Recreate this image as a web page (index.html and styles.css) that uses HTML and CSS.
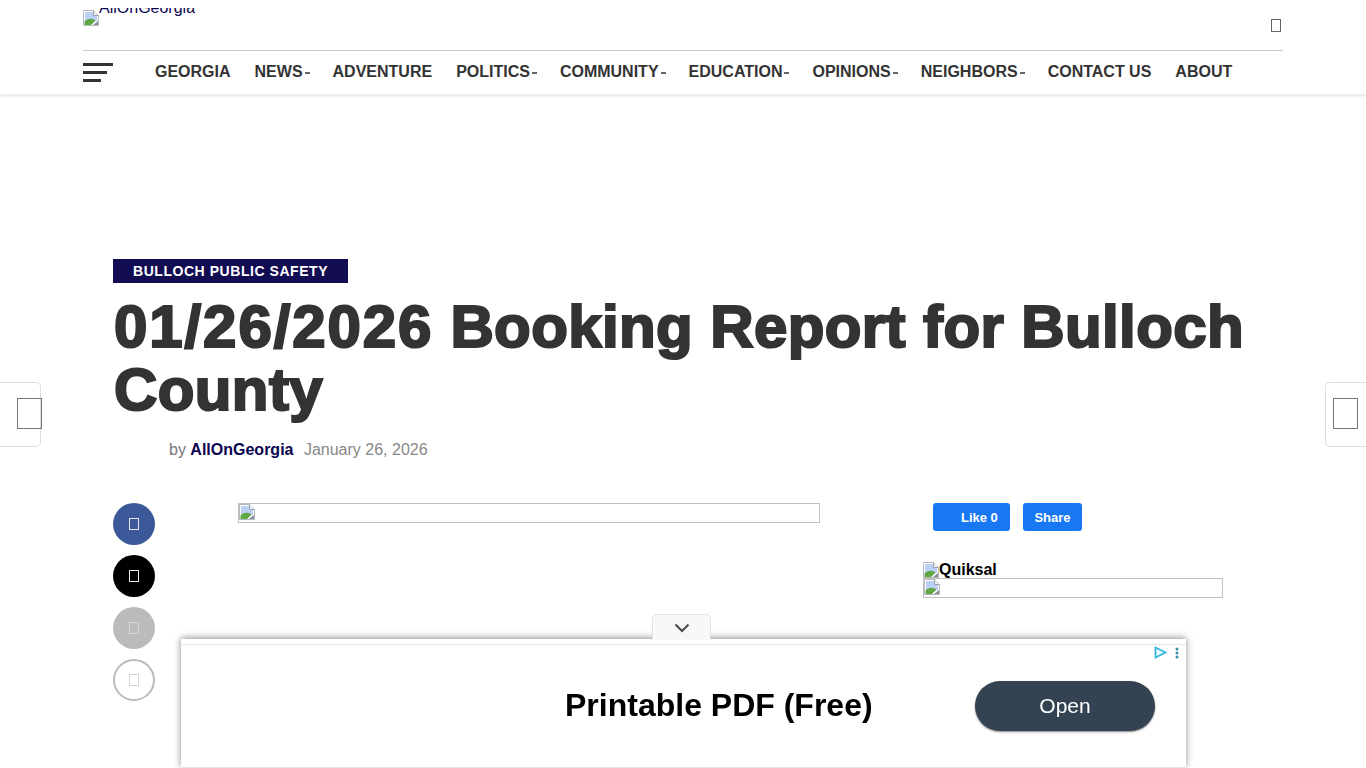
FILE: index.html
```html
<!DOCTYPE html>
<html lang="en">
<head>
<meta charset="utf-8">
<title>01/26/2026 Booking Report for Bulloch County</title>
<link rel="stylesheet" href="styles.css">
</head>
<body>
<svg class="defs" width="0" height="0" aria-hidden="true">
  <symbol id="broken" viewBox="0 0 16 16">
    <path d="M0.5 0.5H10.5L15.5 5.5V15.5H0.5Z" fill="#fff" stroke="#b4b8bf"/>
    <path d="M2 2H10V6H14V11L2 13Z" fill="#bcd0f6"/>
    <path d="M1.500 15V11.500C5 8 9 8 12.500 10.500L8 15Z" fill="#5fa843"/>
    <path d="M10.5 0.5V5.5H15.5" fill="#eef0f4" stroke="#9aa0a8"/>
    <path d="M10 15L15 11V15Z" fill="#8a8f96"/>
  </symbol>
</svg>

<header class="site-header">
  <div class="header-inner">
    <div class="logo-row">
      <a class="logo" href="#">
        <svg class="broken-icon"><use href="#broken"/></svg>
        <span class="logo-alt"><span>AllOnGeorgia</span></span>
      </a>
      <span class="tofu tofu-search"></span>
    </div>
    <nav class="nav-row">
      <span class="burger"><i class="b1"></i><i class="b2"></i><i class="b3"></i></span>
      <ul class="menu">
        <li>Georgia</li>
        <li class="has-sub">News</li>
        <li>Adventure</li>
        <li class="has-sub">Politics</li>
        <li class="has-sub">Community</li>
        <li class="has-sub">Education</li>
        <li class="has-sub">Opinions</li>
        <li class="has-sub">Neighbors</li>
        <li>Contact Us</li>
        <li>About</li>
      </ul>
    </nav>
  </div>
</header>

<main class="page">
  <span class="category">Bulloch Public Safety</span>
  <h1 class="title"><span class="num">01/26/2026</span> <span>Booking Report for Bulloch</span> <span>County</span></h1>
  <p class="meta">by <a class="author" href="#">AllOnGeorgia</a> <span class="date">January 26, 2026</span></p>

  <div class="article-grid">
    <div class="share-col">
      <span class="circle c-fb"><i class="tofu"></i></span>
      <span class="circle c-x"><i class="tofu"></i></span>
      <span class="circle c-grey"><i class="tofu"></i></span>
      <span class="circle c-outline"><i class="tofu"></i></span>
    </div>
    <div class="main-col">
      <div class="img-box feature"><svg class="broken-icon"><use href="#broken"/></svg></div>
    </div>
    <aside class="side-col">
      <div class="fb-row">
        <span class="fb-btn fb-like">Like 0</span>
        <span class="fb-btn fb-share">Share</span>
      </div>
      <div class="quiksal"><svg class="broken-icon"><use href="#broken"/></svg><b>Quiksal</b></div>
      <div class="img-box side-ad"><svg class="broken-icon"><use href="#broken"/></svg></div>
    </aside>
  </div>
</main>

<a class="side-tab tab-left" href="#"><span class="tab-box"></span></a>
<a class="side-tab tab-right" href="#"><span class="tab-box"></span></a>

<div class="ad-bar">
  <span class="ad-toggle">
    <svg width="16" height="10" viewBox="0 0 16 10"><path d="M1.5 1.5L8 8L14.500 1.500" fill="none" stroke="#4a4a4a" stroke-width="2"/></svg>
  </span>
  <div class="ad-body">
    <span class="ad-marks">
      <svg width="13" height="13" viewBox="0 0 13 13"><path d="M1.500 1.500L11.500 6.500L1.500 11.500Z" fill="#eefaff" stroke="#35b8dc" stroke-width="1.800"/></svg>
      <svg width="4" height="12" viewBox="0 0 4 12"><circle cx="2" cy="2" r="1.500" fill="#3a8fa8"/><circle cx="2" cy="6" r="1.500" fill="#3a8fa8"/><circle cx="2" cy="10" r="1.500" fill="#3a8fa8"/></svg>
    </span>
    <span class="ad-title">Printable PDF (Free)</span>
    <span class="ad-open">Open</span>
  </div>
</div>
</body>
</html>
```
FILE: styles.css
```css
* { box-sizing: border-box; }
html, body { margin: 0; padding: 0; }
body {
  background: #fff;
  color: #333;
  font-family: "Liberation Sans", Arial, sans-serif;
  height: 768px;
  overflow: hidden;
}
.defs { position: absolute; }
a { color: inherit; text-decoration: none; }

.site-header {
  height: 95px;
  background: #fff;
  border-bottom: 1px solid #eee;
  box-shadow: 0 1px 3px rgba(0, 0, 0, .12);
}
.header-inner { width: 1200px; margin: 0 auto; }
.logo-row {
  height: 51px;
  border-bottom: 1px solid #c9c9c9;
  display: flex;
  justify-content: space-between;
  align-items: flex-start;
}
.logo {
  display: flex;
  align-items: flex-start;
  padding-top: 8px;
  color: #0c0550;
  font-size: 16px;
}
.broken-icon { width: 16px; height: 16px; display: block; flex: none; }
.logo .broken-icon { margin-top: 2px; }
.logo-alt {
  display: block;
  height: 9px;
  overflow: hidden;
}
.logo-alt span { display: block; line-height: 16px; margin-top: -8px; }
.tofu { display: block; border: 1px solid #333; }
.tofu-search { width: 10px; height: 13px; margin: 19px 2px 0 0; border-color: #666; }

.nav-row { height: 43px; display: flex; align-items: center; }
.burger { width: 30px; display: flex; flex-direction: column; gap: 5px; margin-right: 42px; }
.burger i { display: block; height: 3px; background: #333; }
.b2 { width: 24px; }
.b3 { width: 18px; }
.menu {
  list-style: none;
  margin: 0 0 2px;
  padding: 0;
  display: flex;
  gap: 24px;
  font-size: 16px;
  font-weight: 700;
  text-transform: uppercase;
  color: #333;
  line-height: 41px;
}
.has-sub { position: relative; margin-right: -1px; padding-right: 7px; }
.has-sub::after {
  content: "";
  position: absolute;
  right: 0;
  top: 21px;
  width: 5px;
  height: 2px;
  background: #666;
}

.page { width: 1200px; margin: 0 auto; padding: 164px 30px 0; }
.category {
  display: block;
  width: 235px;
  height: 24px;
  padding-left: 20px;
  background: #120c52;
  color: #fff;
  font-size: 14px;
  font-weight: 700;
  letter-spacing: .55px;
  line-height: 25px;
  text-transform: uppercase;
}
.title {
  margin: 12px 0 0;
  padding-left: 1px;
  font-size: 60px;
  line-height: 63px;
  font-weight: 700;
  color: #333;
  -webkit-text-stroke: 2.200px #333;
  letter-spacing: .4px;
}
.num { letter-spacing: 1.900px; }
.meta {
  margin: 18px 0 0 56px;
  font-size: 16px;
  line-height: 22px;
  color: #777;
}
.author { font-weight: 700; color: #0c0550; margin-right: 6px; }
.date { color: #888; }

.article-grid {
  display: grid;
  grid-template-columns: 42px 768px 300px;
  margin-top: 42px;
}
.share-col { display: flex; flex-direction: column; gap: 10px; }
.circle {
  width: 42px;
  height: 42px;
  border-radius: 50%;
  display: flex;
  align-items: center;
  justify-content: center;
}
.circle .tofu { width: 10px; height: 12px; border-color: #e8e8e8; }
.c-fb { background: #3b5998; }
.c-x { background: #000; }
.c-grey { background: #bbb; }
.c-grey .tofu { border-color: #d8d8d8; }
.c-outline { border: 2px solid #bbb; background: #fff; }
.c-outline .tofu { border-color: #d4d4d4; }

.main-col { padding-left: 83px; }
.img-box { border: 1px solid #c0c0c0; height: 20px; overflow: hidden; }
.feature { width: 582px; }
.side-ad { width: 300px; }

.fb-row { display: flex; gap: 13px; padding-left: 10px; }
.fb-btn {
  height: 28px;
  background: #1877f2;
  border-radius: 3px;
  color: #fff;
  font-size: 13px;
  font-weight: 700;
  line-height: 29px;
}
.fb-like { width: 77px; padding-left: 28px; }
.fb-share { width: 59px; text-align: center; }
.quiksal {
  display: flex;
  align-items: flex-end;
  margin-top: 30px;
  height: 17px;
  color: #000;
  font-size: 16px;
  line-height: 17px;
}

.side-tab {
  position: fixed;
  top: 382px;
  width: 41px;
  height: 65px;
  background: #fff;
  border: 1px solid #ddd;
}
.tab-left { left: 0; border-left: 0; border-radius: 0 5px 5px 0; }
.tab-right { right: 0; border-right: 0; border-radius: 5px 0 0 5px; }
.tab-box { position: absolute; top: 15px; width: 25px; height: 31px; border: 1px solid #777; }
.tab-left .tab-box { left: 17px; }
.tab-right .tab-box { left: 7px; }

.ad-bar {
  position: fixed;
  left: 181px;
  top: 639px;
  width: 1005px;
  height: 129px;
  background: #fff;
  box-shadow: 0 -1px 7px rgba(0, 0, 0, .45);
  padding-top: 5px;
  border-bottom: 1px solid #e6e6e6;
}
.ad-toggle {
  position: absolute;
  left: 471px;
  top: -25px;
  width: 59px;
  height: 26px;
  background: #f8f8f8;
  border: 1px solid #e2e2e2;
  border-bottom: 0;
  border-radius: 5px 5px 0 0;
  display: flex;
  align-items: center;
  justify-content: center;
}
.ad-body {
  position: relative;
  height: 123px;
  border-top: 1px solid #e4e4e4;
  display: block;
}
.ad-marks {
  position: absolute;
  right: 7px;
  top: 1px;
  display: flex;
  align-items: center;
  gap: 8px;
}
.ad-title {
  position: absolute;
  left: 384px;
  top: 41px;
  font-size: 32px;
  font-weight: 700;
  line-height: 39px;
  color: #000;
}
.ad-open {
  position: absolute;
  left: 794px;
  top: 36px;
  width: 180px;
  height: 50px;
  border-radius: 25px;
  background: #334351;
  box-shadow: 0 1px 2px rgba(0, 0, 0, .5);
  color: #fff;
  font-size: 21px;
  line-height: 50px;
  text-align: center;
}
```
